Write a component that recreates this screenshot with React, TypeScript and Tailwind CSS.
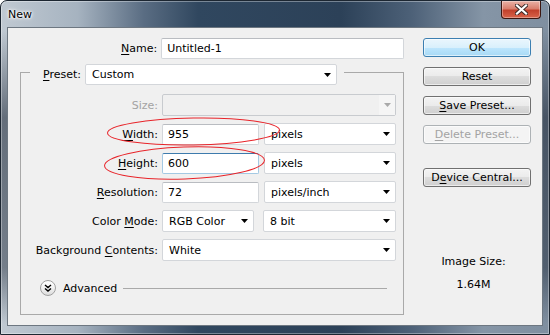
import React from "react";

const frameBg =
  "bg-[linear-gradient(180deg,rgba(0,0,0,0)_9%,rgba(25,35,50,0.55)_35%,rgba(25,35,50,0.45)_80%,rgba(0,0,0,0)_97%),linear-gradient(90deg,#c0c9d2_0%,#a6b3c0_14%,#5a6d83_26%,#30475f_36%,#2c4158_62%,#4d6178_75%,#8595a6_88%,#7f8fa0_100%)]";

function U({ children }: { children: React.ReactNode }) {
  return <span className="underline decoration-1 underline-offset-[2px]">{children}</span>;
}

function Arrow({ disabled = false }: { disabled?: boolean }) {
  return (
    <svg width="7" height="4" viewBox="0 0 7 4" className="shrink-0">
      <path d="M0 0H7L3.5 4Z" fill={disabled ? "#a9a9a9" : "#000"} />
    </svg>
  );
}

function TextBox({ value, width, focused = false }: { value: string; width: string; focused?: boolean }) {
  return (
    <div
      className={`${width} h-[21px] flex items-center rounded-[2px] border bg-white pl-[5px] ${
        focused ? "border-[#a4c9e3] border-t-[#3d7bad]" : "border-[#d3d6da] border-t-[#b9bcc1]"
      }`}
    >
      {value}
    </div>
  );
}

function Select({ value, width, height = "h-[22px]" }: { value: string; width: string; height?: string }) {
  return (
    <div
      className={`${width} ${height} flex items-center justify-between rounded-[2px] border border-[#d3d6da] bg-white pl-[6px] pr-[5px]`}
    >
      <span>{value}</span>
      <Arrow />
    </div>
  );
}

function Row({ label, disabled = false, children }: { label: React.ReactNode; disabled?: boolean; children: React.ReactNode }) {
  return (
    <div className="flex h-[22px] items-center gap-[4px]">
      <span className={`w-[137px] text-right ${disabled ? "text-[#a3a3a3]" : ""}`}>{label}</span>
      {children}
    </div>
  );
}

function Button({ children, kind = "normal" }: { children: React.ReactNode; kind?: "normal" | "default" | "disabled" }) {
  const styles = {
    normal:
      "border-[#707070] bg-[linear-gradient(180deg,#f3f3f3_0%,#ebebeb_50%,#dddddd_50%,#cfcfcf_100%)] text-black",
    default:
      "border-[#3c7fb1] bg-[linear-gradient(180deg,#eaf6fd_0%,#d9f0fc_50%,#bee6fd_50%,#a7d9f5_100%)] text-black",
    disabled: "border-[#adb2b5] bg-[#f4f4f4] text-[#a3a3a3]",
  }[kind];
  return (
    <div
      className={`flex h-[19px] w-[108px] items-center justify-center rounded-[3px] border shadow-[inset_0_0_0_1px_rgba(255,255,255,0.6)] ${styles}`}
    >
      {children}
    </div>
  );
}

export default function App() {
  return (
    <div
      className={`relative flex h-[335px] w-[550px] flex-col overflow-hidden rounded-t-[7px] border border-[#1c2631] font-['DejaVu_Sans',sans-serif] text-[11px] leading-[13px] text-black shadow-[inset_0_0_0_1px_rgba(255,255,255,0.35)] ${frameBg}`}
    >
      {/* title bar */}
      <div className="flex h-[26px] shrink-0 items-start justify-between">
        <span className="pl-[7px] pt-[7px] [text-shadow:0_0_5px_#fff,0_0_3px_#fff,0_0_2px_#fff]">New</span>
        <div className="mr-[8px] flex h-[18px] w-[40px] items-center justify-center rounded-b-[4px] border border-t-0 border-[#3b1610] bg-[linear-gradient(180deg,#e9b1a6_0%,#d97f6e_45%,#c2412c_55%,#d8634a_100%)] shadow-[inset_0_0_0_1px_rgba(255,255,255,0.35)]">
          <svg width="13" height="11" viewBox="0 0 13 11">
            <path d="M2 1.5L11 9.5M11 1.5L2 9.5" stroke="#3a2a28" strokeWidth="4" strokeLinecap="square" />
            <path d="M2 1.5L11 9.5M11 1.5L2 9.5" stroke="#fff" strokeWidth="2.2" strokeLinecap="square" />
          </svg>
        </div>
      </div>

      {/* client area */}
      <div className="mx-[6px] flex h-[299px] border border-[#6d7781] bg-[#f0f0f0]">
        {/* left column */}
        <div className="flex w-[396px] shrink-0 flex-col">
          <div className="mt-[10px] flex h-[21px] items-center gap-[4px]">
            <span className="w-[150px] text-right">
              <U>N</U>ame:
            </span>
            <TextBox value="Untitled-1" width="w-[244px]" />
          </div>

          <div className="ml-[12px] mt-[13px] flex h-[243px] w-[384px] flex-col border border-[#a9a9a9]">
            <div className="-mt-[9px] ml-[9px] flex w-fit items-center gap-[4px] bg-[#f0f0f0] pr-[7px]">
              <span className="w-[51px] text-right">
                <U>P</U>reset:
              </span>
              <Select value="Custom" width="w-[252px]" height="h-[21px]" />
            </div>

            <div className="mt-[9px] flex flex-col gap-[7px]">
              <Row label="Size:" disabled>
                <div className="flex h-[22px] w-[234px] items-center justify-end rounded-[2px] border border-[#c8cbcf] bg-[#f0f0f0]">
                  <div className="flex h-full w-[16px] items-center justify-center bg-[#f5f5f5]">
                    <Arrow disabled />
                  </div>
                </div>
              </Row>
              <Row
                label={
                  <>
                    <U>W</U>idth:
                  </>
                }
              >
                <TextBox value="955" width="w-[97px]" />
                <div className="ml-[1px]">
                  <Select value="pixels" width="w-[132px]" />
                </div>
              </Row>
              <Row
                label={
                  <>
                    <U>H</U>eight:
                  </>
                }
              >
                <TextBox value="600" width="w-[97px]" focused />
                <div className="ml-[1px]">
                  <Select value="pixels" width="w-[132px]" />
                </div>
              </Row>
              <Row
                label={
                  <>
                    <U>R</U>esolution:
                  </>
                }
              >
                <TextBox value="72" width="w-[97px]" />
                <div className="ml-[1px]">
                  <Select value="pixels/inch" width="w-[132px]" />
                </div>
              </Row>
              <Row
                label={
                  <>
                    Color <U>M</U>ode:
                  </>
                }
              >
                <Select value="RGB Color" width="w-[92px]" />
                <div className="ml-[5px]">
                  <Select value="8 bit" width="w-[133px]" />
                </div>
              </Row>
              <Row
                label={
                  <>
                    Background <U>C</U>ontents:
                  </>
                }
              >
                <Select value="White" width="w-[234px]" />
              </Row>
            </div>

            <div className="ml-[19px] mt-[19px] flex h-[16px] items-center">
              <div className="flex h-[16px] w-[16px] items-center justify-center rounded-full border border-[#a0a0a0] bg-[linear-gradient(180deg,#ffffff_0%,#f2f2f2_50%,#dcdcdc_100%)]">
                <svg width="8" height="8" viewBox="0 0 8 8">
                  <path d="M1 1L4 3.5L7 1M1 4.5L4 7L7 4.5" fill="none" stroke="#000" strokeWidth="1.4" />
                </svg>
              </div>
              <span className="ml-[7px]">Advanced</span>
              <div className="ml-[6px] mr-[16px] h-px flex-1 bg-[#a9a9a9]" />
            </div>
          </div>
        </div>

        {/* right column */}
        <div className="ml-[19px] flex flex-col">
          <div className="mt-[10px] flex flex-col gap-[10px]">
            <Button kind="default">OK</Button>
            <Button>Reset</Button>
            <Button>
              <span>
                <U>S</U>ave Preset...
              </span>
            </Button>
            <Button kind="disabled">
              <span>
                <U>D</U>elete Preset...
              </span>
            </Button>
            <div className="mt-[14px]">
              <Button>
                <span>
                  D<U>e</U>vice Central...
                </span>
              </Button>
            </div>
          </div>
          <div className="mt-[68px] flex w-[108px] flex-col items-center pr-[7px]">
            <span>Image Size:</span>
            <span className="mt-[10px]">1.64M</span>
          </div>
        </div>
      </div>

      {/* red annotation ellipses */}
      <svg className="pointer-events-none absolute left-0 top-0" width="550" height="335" viewBox="0 0 550 335">
        <ellipse cx="192.5" cy="130.5" rx="86" ry="13.5" fill="none" stroke="#e8242a" strokeWidth="1" transform="rotate(-1 192.5 130.5)" />
        <ellipse cx="183.5" cy="162" rx="80" ry="16" fill="none" stroke="#e8242a" strokeWidth="1" transform="rotate(-2 183.5 162)" />
      </svg>
    </div>
  );
}
